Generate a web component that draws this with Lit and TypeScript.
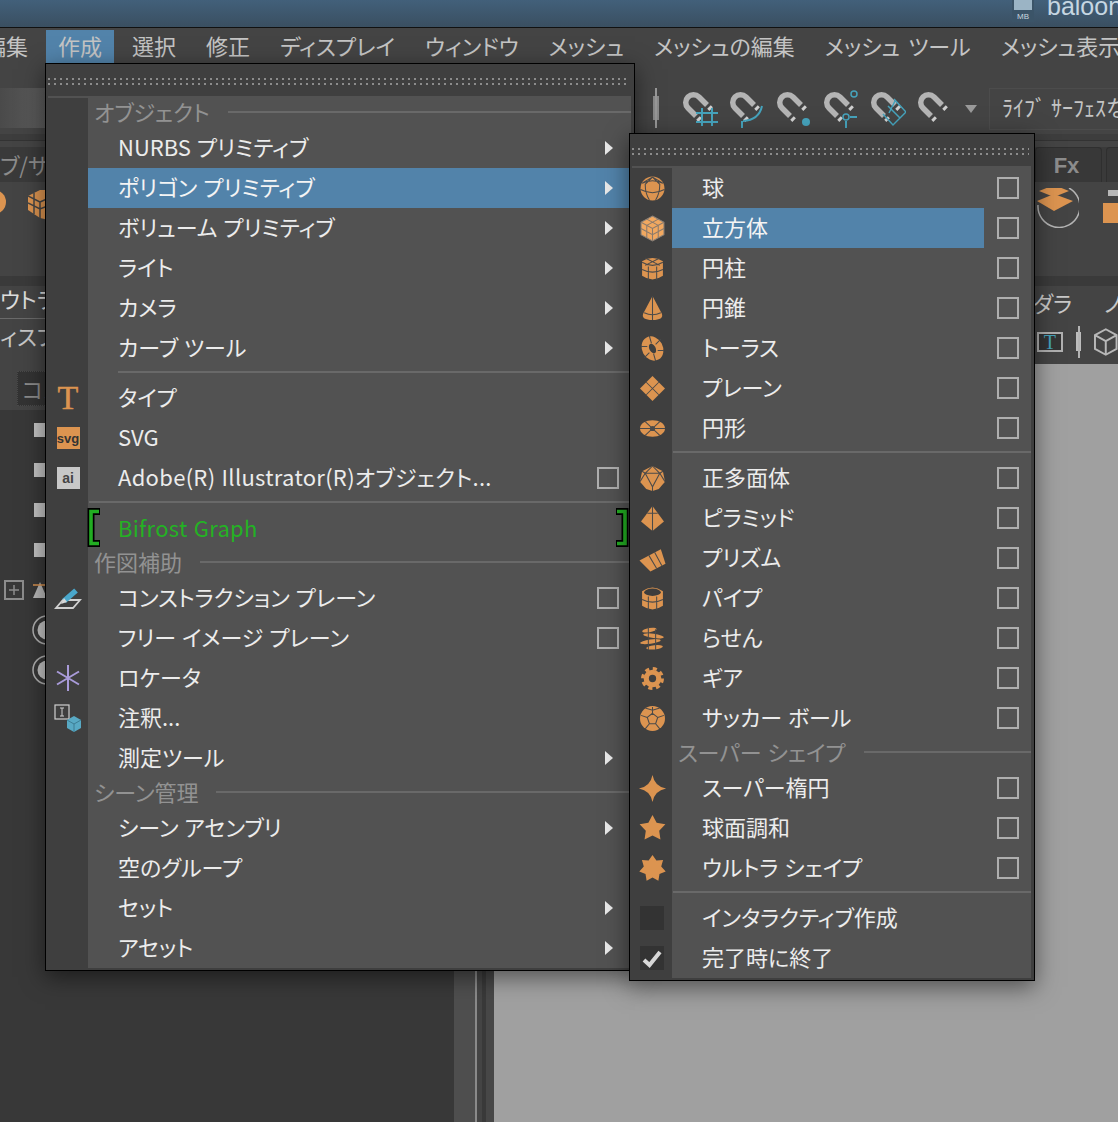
import { LitElement, html, css, svg, nothing } from 'lit';
import { customElement, property } from 'lit/decorators.js';

const O = '#dc9450';
const L = '#4a4a4a';

type Row = {
  kind?: 'item' | 'header' | 'sep' | 'sepInset';
  label?: string;
  icon?: unknown;
  arrow?: boolean;
  box?: boolean;
  hot?: boolean;
  wide?: boolean;
  bifrost?: boolean;
};

function ic(body: unknown) {
  return html`<svg class="ic" viewBox="0 0 24 24" width="25" height="25">${body}</svg>`;
}

function star(n: number, inner: number, r = 12.5) {
  const pts: string[] = [];
  for (let i = 0; i < n * 2; i++) {
    const rad = i % 2 ? r * inner : r;
    const a = (Math.PI * i) / n - Math.PI / 2;
    pts.push(`${(12 + rad * Math.cos(a)).toFixed(2)},${(12 + rad * Math.sin(a)).toFixed(2)}`);
  }
  return pts.join(' ');
}

const lines = (d: string, c = L, w = 1) => svg`<path d=${d} fill="none" stroke=${c} stroke-width=${w} />`;

const icons = {
  sphere: ic(svg`<circle cx="12" cy="12" r="11.5" fill=${O} />${lines('M2 7Q12 2 22 7M.5 13Q12 19 23.5 13M12 1L5 8Q5 17 9 23M12 1L19 8Q19 17 15 23M2 7L12 1L22 7', L)}`),
  cube: ic(svg`<polygon points="12,0 23,6 23,18 12,24 1,18 1,6" fill="#f1a860" stroke="#8b8178" />${lines('M1 6L12 12L23 6M12 12V24M6.500 3L17.500 9M17.500 3L6.500 9M1 12L12 18L23 12M6.500 9V21M17.500 9V21', '#8a7a6c')}`),
  cylinder: ic(svg`<path d="M2 5Q12-1 22 5V19Q12 26 2 19Z" fill=${O} />${lines('M2 6Q12 12 22 6M5 2L19 9M19 2L5 9M2 13Q12 18 22 13M8 10V23M16 10V23', L)}`),
  cone: ic(svg`<path d="M12 0L21 17Q23 23 12 23Q1 23 3 17Z" fill=${O} />${lines('M12 0V23M4 16Q12 20 20 16', L)}`),
  torus: ic(svg`<g transform="rotate(-28 12 12)"><ellipse cx="12" cy="12" rx="6.500" ry="8.500" fill="none" stroke=${O} stroke-width="7" /></g>${lines('M9 0L11 7M1 10L7 10M15 24L13 17M23 14L17 14M20 3L15 8M4 21L9 16', L)}`),
  plane: ic(svg`<polygon points="12,0 24,12 12,24 0,12" fill=${O} />${lines('M6 6L18 18M18 6L6 18', L)}`),
  disc: ic(svg`<ellipse cx="12" cy="12" rx="12" ry="8" fill=${O} />${lines('M5 5.500L19 18.500M19 5.500L5 18.500', L)}${lines('M0 12H24', L, 1)}<circle cx="12" cy="12" r="2.500" fill=${L} />`),
  ico: ic(svg`<polygon points="12,0 22,5 24,15 18,22 12,24 6,22 0,15 2,5" fill=${O} />${lines('M12 0L5 7H19L12 0M5 7L12 20L19 7M5 7L0 15M19 7L24 15M12 20V24M5 7L2 5M19 7L22 5', L)}`),
  pyramid: ic(svg`<polygon points="12,0 23,15 12,24 1,15" fill=${O} />${lines('M12 0V24M7 7L17 7', L)}`),
  prism: ic(svg`<polygon points="-.5,14 20,3 24.500,17 10,24.500" fill=${O} />${lines('M8.500 9L16 21.500M14 6L21 19', L)}`),
  pipe: ic(svg`<path d="M2 5Q12-2 22 5V19Q12 26 2 19Z" fill=${O} /><ellipse cx="12" cy="6" rx="8" ry="3.500" fill="#3c3c3c" />${lines('M2 13Q12 18 22 13M8 10V23M16 10V23', L)}`),
  spiral: ic(svg`<g fill=${O}><ellipse cx="9" cy="4" rx="7" ry="2" transform="rotate(-10 9 4)" /><ellipse cx="13" cy="9.500" rx="10" ry="2" transform="rotate(8 13 9.500)" /><ellipse cx="10" cy="15" rx="10" ry="2" transform="rotate(-8 10 15)" /><ellipse cx="14" cy="20.500" rx="8" ry="2" transform="rotate(-6 14 20.500)" /></g>${lines('M8 1V23M15 3V23', L)}`),
  gear: ic(svg`<circle cx="12" cy="12" r="6" fill="none" stroke=${O} stroke-width="5" /><circle cx="12" cy="12" r="9.500" fill="none" stroke=${O} stroke-width="3" stroke-dasharray="3.960 3.500" />`),
  soccer: ic(svg`<circle cx="12" cy="12" r="12" fill=${O} />${lines('M12 7L17 11L15 17H9L7 11ZM12 7V1M17 11L23 9M15 17L19 22M9 17L5 22M7 11L1 9M5 2L12 4L19 2', L)}`),
  star4: ic(svg`<path d="M12-1Q14 10 25 12Q14 14 12 25Q10 14-1 12Q10 10 12-1Z" fill=${O} />`),
  star5: ic(svg`<polygon points=${star(5, 0.52, 13)} fill=${O} />`),
  star7: ic(svg`<polygon points=${star(7, 0.66, 13)} fill=${O} />`),
  pen: html`<svg class="ic" viewBox="0 0 26 24" width="26" height="24"><path d="M8 14H25L18 22H1Z" fill="none" stroke="#d0d0d0" stroke-width="1.800" /><path d="M9 15L21 4.500" fill="none" stroke="#4aa8cc" stroke-width="5.500" /><path d="M6 18L9 12L12 16Z" fill="#d8d8d8" /></svg>`,
  locator: html`<svg class="ic" viewBox="0 0 24 26" width="24" height="26"><path d="M12 0V26M1 6.500L23 19.500M23 6.500L1 19.500" stroke="#a99bd9" stroke-width="2" fill="none" /></svg>`,
  note: html`<svg class="ic" viewBox="0 0 28 28" width="28" height="28"><rect x="1" y="1" width="14" height="14" fill="none" stroke="#cfcfcf" stroke-width="1.200" /><path d="M6 4H10M6 12H10M8 4V12" stroke="#cfcfcf" fill="none" /><polygon points="20,12 27,16 27,24 20,28 13,24 13,16" fill="#58a9c4" /><path d="M13 16L20 20L27 16M20 20V28" stroke="#3d7d94" fill="none" /></svg>`,
};

const bracket = (flip: boolean) => html`<svg class="bracket ${flip ? 'right' : 'left'}" viewBox="0 0 13 39" width="13" height="39">
  <path d="M13 3.500H4V35.500H13" fill="none" stroke="#000" stroke-width="7" />
  <path d="M12 3.500H4V35.500H12" fill="none" stroke="#22ad22" stroke-width="3.600" />
</svg>`;

const createRows: Row[] = [
  { kind: 'header', label: 'オブジェクト' },
  { label: 'NURBS プリミティブ', arrow: true },
  { label: 'ポリゴン プリミティブ', arrow: true, hot: true },
  { label: 'ボリューム プリミティブ', arrow: true },
  { label: 'ライト', arrow: true },
  { label: 'カメラ', arrow: true },
  { label: 'カーブ ツール', arrow: true },
  { kind: 'sepInset' },
  { label: 'タイプ', icon: html`<span class="glyph-t">T</span>` },
  { label: 'SVG', icon: html`<span class="badge svg">svg</span>` },
  { label: 'Adobe(R) Illustrator(R)オブジェクト...', icon: html`<span class="badge ai">ai</span>`, box: true, wide: true },
  { kind: 'sep' },
  { label: 'Bifrost Graph', bifrost: true, wide: true },
  { kind: 'header', label: '作図補助' },
  { label: 'コンストラクション プレーン', icon: icons.pen, box: true },
  { label: 'フリー イメージ プレーン', box: true },
  { label: 'ロケータ', icon: icons.locator },
  { label: '注釈...', icon: icons.note },
  { label: '測定ツール', arrow: true },
  { kind: 'header', label: 'シーン管理' },
  { label: 'シーン アセンブリ', arrow: true },
  { label: '空のグループ' },
  { label: 'セット', arrow: true },
  { label: 'アセット', arrow: true },
];

const polyRows: Row[] = [
  { label: '球', icon: icons.sphere, box: true },
  { label: '立方体', icon: icons.cube, box: true, hot: true },
  { label: '円柱', icon: icons.cylinder, box: true },
  { label: '円錐', icon: icons.cone, box: true },
  { label: 'トーラス', icon: icons.torus, box: true },
  { label: 'プレーン', icon: icons.plane, box: true },
  { label: '円形', icon: icons.disc, box: true },
  { kind: 'sep' },
  { label: '正多面体', icon: icons.ico, box: true },
  { label: 'ピラミッド', icon: icons.pyramid, box: true },
  { label: 'プリズム', icon: icons.prism, box: true },
  { label: 'パイプ', icon: icons.pipe, box: true },
  { label: 'らせん', icon: icons.spiral, box: true },
  { label: 'ギア', icon: icons.gear, box: true },
  { label: 'サッカー ボール', icon: icons.soccer, box: true },
  { kind: 'header', label: 'スーパー シェイプ' },
  { label: 'スーパー楕円', icon: icons.star4, box: true },
  { label: '球面調和', icon: icons.star5, box: true },
  { label: 'ウルトラ シェイプ', icon: icons.star7, box: true },
  { kind: 'sep' },
  { label: 'インタラクティブ作成', icon: html`<span class="dark-box"></span>` },
  {
    label: '完了時に終了',
    icon: html`<span class="dark-box"><svg viewBox="0 0 24 24" width="24" height="24"><path d="M4 14L9.500 19L20 6" fill="none" stroke="#d6d6d6" stroke-width="4" /></svg></span>`,
  },
];

@customElement('maya-menu')
export class MayaMenu extends LitElement {
  @property({ type: Array }) rows: Row[] = [];

  static styles = css`
    :host {
      display: block;
      box-sizing: border-box;
      border: 1px solid #000;
      background: #3f3f3f;
      padding: 0 3px 2px 2px;
      box-shadow: 0 6px 22px rgba(0, 0, 0, 0.5);
      font: 22px "Noto Sans CJK JP", "Noto Sans", sans-serif;
      font-feature-settings: "palt";
      word-spacing: 1px;
      color: #ececec;
    }
    .grip {
      height: 32px;
      box-sizing: border-box;
      padding-top: 14px;
      margin-right: 2px;
    }
    .dots {
      height: 2px;
      margin-bottom: 3px;
      background-image: linear-gradient(90deg, #8c8c8c 2px, transparent 2px);
      background-size: 6px 2px;
    }
    .body {
      padding-top: 2px;
      background: #525252;
    }
    .row {
      position: relative;
      display: flex;
      height: 40px;
      line-height: 36px;
    }
    .gutter {
      width: 40px;
      flex: none;
      display: flex;
      align-items: center;
      justify-content: center;
      background: #3f3f3f;
    }
    .label {
      flex: 1;
      padding-left: 30px;
      white-space: nowrap;
    }
    .wide .label {
      letter-spacing: 0.3px;
    }
    .opt {
      width: 47px;
      flex: none;
      display: flex;
      align-items: center;
      padding-left: 13px;
      box-sizing: border-box;
    }
    .hot .label {
      background: #5283aa;
      color: #f4f4f4;
    }
    .hot.arrow .opt {
      background: #5283aa;
    }
    .box {
      width: 22px;
      height: 22px;
      box-sizing: border-box;
      border: 2px solid #aeaeae;
    }
    .tri {
      margin-left: 8px;
      margin-top: -1px;
      width: 0;
      height: 0;
      border-left: 8px solid #e8e8e8;
      border-top: 7px solid transparent;
      border-bottom: 7px solid transparent;
    }
    .header {
      height: 30px;
      line-height: 26px;
      display: flex;
      align-items: flex-start;
    }
    .header .gutter {
      align-self: stretch;
    }
    .header .title {
      margin-left: 6px;
      color: #929292;
      white-space: nowrap;
    }
    .header .rule {
      flex: 1;
      height: 2px;
      background: #696969;
      margin: 13px 0 0 18px;
    }
    .sep {
      display: flex;
      height: 10px;
    }
    .sep .rule {
      flex: 1;
      height: 2px;
      margin-top: 3px;
      margin-left: 1px;
      background: #696969;
    }
    .sep.inset .rule {
      margin-left: 30px;
    }
    .bif .label {
      color: #24b224;
      line-height: 38px;
    }
    .bracket {
      position: absolute;
      top: 0;
    }
    .bracket.left {
      left: 39px;
    }
    .bracket.right {
      right: 2px;
      transform: scaleX(-1);
    }
    .glyph-t {
      font: 34px/1 "Liberation Serif", serif;
      color: #dc9450;
      -webkit-text-stroke: 0.5px #dc9450;
    }
    .badge {
      width: 23px;
      height: 22px;
      display: flex;
      align-items: center;
      justify-content: center;
      font: bold 13px/1 "Liberation Sans", sans-serif;
      color: #333;
    }
    .badge.svg {
      background: #dc9450;
    }
    .badge.ai {
      background: #c8c8c8;
      color: #444;
      font-size: 14px;
    }
    .dark-box {
      width: 24px;
      height: 24px;
      background: #333;
      display: block;
    }
    .dark-box svg,
    .ic {
      display: block;
      overflow: visible;
    }
  `;

  private renderRow(r: Row) {
    if (r.kind === 'header') {
      return html`<div class="header"><div class="gutter"></div><span class="title">${r.label}</span><div class="rule"></div></div>`;
    }
    if (r.kind === 'sep' || r.kind === 'sepInset') {
      return html`<div class="sep ${r.kind === 'sepInset' ? 'inset' : ''}"><div class="gutter"></div><div class="rule"></div></div>`;
    }
    const cls = `row ${r.hot ? 'hot' : ''} ${r.arrow ? 'arrow' : ''} ${r.bifrost ? 'bif' : ''} ${r.wide ? 'wide' : ''}`;
    return html`<div class=${cls}>
      <div class="gutter">${r.icon ?? nothing}</div>
      <div class="label">${r.label}</div>
      <div class="opt">
        ${r.box ? html`<div class="box"></div>` : nothing}
        ${r.arrow ? html`<div class="tri"></div>` : nothing}
      </div>
      ${r.bifrost ? html`${bracket(false)}${bracket(true)}` : nothing}
    </div>`;
  }

  render() {
    return html`
      <div class="grip"><div class="dots"></div><div class="dots"></div></div>
      <div class="body">${this.rows.map((r) => this.renderRow(r))}</div>
    `;
  }
}

const magnet = (extra: unknown) => html`<svg class="mag" viewBox="0 0 36 40" width="36" height="40">
  <path d="M25 17L17 9A7.500 7.500 0 0 0 6 20L14 28" fill="none" stroke="#b4b4b4" stroke-width="5.500" />
  <path d="M27 19L30 22M16 30L19 33" fill="none" stroke="#d0d0d0" stroke-width="5" stroke-dasharray="3 9" />
  ${extra}
</svg>`;

const teal = (d: string) => svg`<path d=${d} fill="none" stroke="#46a3bc" stroke-width="2" />`;

@customElement('app-root')
export class AppRoot extends LitElement {
  static styles = css`
    :host {
      display: block;
      position: relative;
      width: 1118px;
      height: 1122px;
      overflow: hidden;
      background: #363636;
      font: 22px "Noto Sans CJK JP", "Noto Sans", sans-serif;
      font-feature-settings: "palt";
      color: #c8c8c8;
    }
    .titlebar {
      height: 27px;
      background: linear-gradient(#42607a, #3a4f61);
      border-bottom: 1px solid #111;
      display: flex;
      justify-content: flex-start;
      padding-left: 1012px;
      overflow: hidden;
    }
    .doc {
      width: 22px;
      height: 22px;
      flex: none;
      background: #3b5468;
      position: relative;
      text-align: center;
      font: 8px/8px "Liberation Sans", sans-serif;
      color: #c9d6df;
    }
    .doc i {
      display: block;
      height: 10px;
      margin: 0 2px 3px;
      background: #9bb4c5;
    }
    .filename {
      margin-left: 13px;
      font: 25px/20px "Liberation Sans", sans-serif;
      color: #c6d6e2;
      white-space: nowrap;
      margin-top: -4px;
    }
    .menubar {
      height: 35px;
      display: flex;
      gap: 6px;
      margin-left: -28px;
      background: #444;
      white-space: nowrap;
      word-spacing: 3px;
    }
    .menubar span {
      padding: 0 12px;
      height: 33px;
      margin-top: 2px;
      line-height: 30px;
      color: #c4c4c4;
    }
    .menubar span.on {
      background: #5283aa;
    }
    .toolbar {
      height: 65px;
      background: #444;
      display: flex;
      align-items: flex-start;
      padding-top: 25px;
      box-sizing: border-box;
    }
    .status {
      width: 46px;
      height: 40px;
      background: linear-gradient(90deg, #4a4a4a, #5c5c5c);
    }
    .handle {
      margin-left: 607px;
      margin-right: 23px;
      width: 6px;
      height: 40px;
      background: linear-gradient(#999, #999) center / 2px 100% no-repeat, linear-gradient(#8a8a8a, #8a8a8a) center / 6px 60% no-repeat;
    }
    .mags {
      display: flex;
      gap: 11px;
    }
    .drop {
      margin: 17px 12px 0 12px;
      width: 0;
      height: 0;
      border-top: 8px solid #9a9a9a;
      border-left: 6px solid transparent;
      border-right: 6px solid transparent;
    }
    .live {
      flex: 1;
      height: 40px;
      padding-left: 12px;
      border: 1px solid #4c4c4c;
      border-right: none;
      font-size: 22px;
      line-height: 34px;
      white-space: nowrap;
      overflow: hidden;
      font-feature-settings: normal;
      color: #c4c4c4;
    }
    .band {
      height: 19px;
      background: linear-gradient(#444 0 6px, #3d3d3d 6px 12px, #333 12px 13px, #444 13px);
    }
    .tabs {
      height: 35px;
      display: flex;
      justify-content: space-between;
      background: #3a3a3a;
      color: #8c8c8c;
      overflow: hidden;
    }
    .tabs .left {
      line-height: 34px;
      white-space: nowrap;
    }
    .tab-wrap {
      display: flex;
      gap: 4px;
      margin-right: -4px;
    }
    .tab {
      width: 67px;
      text-align: center;
      padding-right: 4px;
      box-sizing: border-box;
      border: 1px solid #2f2f2f;
      border-bottom: none;
      border-radius: 4px 4px 0 0;
      background: #383838;
      font: bold 22px/36px "Liberation Sans", sans-serif;
      color: #8c8c8c;
    }
    .tab.next {
      width: 16px;
    }
    .shelf {
      height: 94px;
      background: #444;
      display: flex;
      justify-content: space-between;
      align-items: flex-start;
      padding-top: 6px;
      box-sizing: border-box;
    }
    .shelf .l,
    .shelf .r {
      display: flex;
    }
    .shelf .l {
      margin-left: -18px;
      gap: 22px;
    }
    .shelf .r {
      gap: 24px;
    }
    .shelf-square {
      width: 15px;
      padding-top: 2px;
    }
    .shelf-square i {
      display: block;
      height: 6px;
      margin-left: 5px;
      background: #b8b8b8;
      margin-bottom: 7px;
    }
    .shelf-square b {
      display: block;
      height: 20px;
      background: #dc9450;
    }
    .workgap {
      height: 10px;
      background: #3a3a3a;
    }
    .work {
      display: flex;
      height: 836px;
    }
    .outliner {
      width: 454px;
      flex: none;
      background: #383838;
    }
    .out-head {
      height: 124px;
      background: #444;
      white-space: nowrap;
      box-sizing: border-box;
    }
    .out-title {
      height: 32px;
      line-height: 25px;
      color: #dcdcdc;
      border-bottom: 1px solid #6a6a6a;
    }
    .out-sub {
      height: 37px;
      line-height: 32px;
    }
    .out-field {
      margin: 15px 0 0 17px;
      height: 35px;
      padding-left: 4px;
      width: 30px;
      background: #333;
      border: 1px dotted #4a4a4a;
      box-sizing: border-box;
      color: #8a8a8a;
      line-height: 32px;
    }
    .tree-row {
      height: 40px;
      display: flex;
      align-items: center;
      padding-left: 34px;
    }
    .tree-row i {
      width: 14px;
      height: 14px;
      background: #c4c4c4;
    }
    .plus {
      margin-left: -30px;
      margin-right: 9px;
      width: 20px;
      height: 20px;
      flex: none;
    }
    .ring {
      width: 30px;
      height: 30px;
      margin-left: -2px;
      flex: none;
    }
    .strips {
      width: 40px;
      flex: none;
      display: flex;
    }
    .s1 {
      width: 21px;
      background: #4e4e4e;
    }
    .s2 {
      width: 2px;
      background: #8a8a8a;
    }
    .s3 {
      flex: 1;
      background: linear-gradient(90deg, #444 0 5px, #393939 5px 9px, #474747 9px);
    }
    .view {
      flex: 1;
      display: flex;
      flex-direction: column;
      min-width: 0;
    }
    .pane-menu {
      height: 34px;
      background: #444;
      display: flex;
      padding-left: 539px;
      gap: 32px;
      line-height: 32px;
      white-space: nowrap;
      overflow: hidden;
    }
    .pane-tools {
      height: 44px;
      background: #444;
      display: flex;
      align-items: center;
      padding-left: 543px;
    }
    .tbox {
      width: 26px;
      height: 20px;
      border: 2px solid #b0b0b0;
      background: #333;
      box-sizing: border-box;
      font: 20px/17px "Liberation Serif", serif;
      color: #46a3bc;
      text-align: center;
    }
    .pane-grip {
      margin: 0 13px;
      width: 6px;
      height: 32px;
      background: linear-gradient(#b4b4b4, #b4b4b4) center / 2px 100% no-repeat, linear-gradient(#bcbcbc, #bcbcbc) center / 6px 60% no-repeat;
    }
    .viewport {
      flex: 1;
      background: #a0a0a0;
    }
    maya-menu {
      position: absolute;
    }
    .m-create {
      left: 45px;
      top: 63px;
      width: 590px;
    }
    .m-poly {
      left: 629px;
      top: 133px;
      width: 406px;
    }
  `;

  render() {
    return html`
      <div class="titlebar">
        <div class="doc"><i></i>MB</div>
        <div class="filename">baloon</div>
      </div>
      <div class="menubar">
        <span>編集</span><span class="on">作成</span><span>選択</span><span>修正</span><span>ディスプレイ</span><span>ウィンドウ</span><span>メッシュ</span><span>メッシュの編集</span><span>メッシュ ツール</span><span>メッシュ表示</span>
      </div>
      <div class="toolbar">
        <div class="status"></div>
        <div class="handle"></div>
        <div class="mags">
          ${magnet(teal('M20 20V38M30 20V38M14 25H36M14 34H36'))}
          ${magnet(teal('M14 33Q30 32 33 18M13 33V40'))}
          ${magnet(svg`<circle cx="30" cy="34" r="4" fill="#46a3bc" />`)}
          ${magnet(svg`<circle cx="31" cy="6" r="3" fill="none" stroke="#46a3bc" stroke-width="1.500" /><circle cx="23" cy="29" r="3" fill="none" stroke="#46a3bc" stroke-width="1.500" />${teal('M27 29H34M23 33V40')}`)}
          ${magnet(svg`<path d="M24 11L36 24L23 37L13 26M18 18L30 30M25 13L19 25" fill="none" stroke="#46a3bc" stroke-width="1.500" />`)}
          ${magnet(nothing)}
        </div>
        <div class="drop"></div>
        <div class="live">ﾗｲﾌﾞ ｻｰﾌｪｽな</div>
      </div>
      <div class="band"></div>
      <div class="tabs">
        <div class="left">ブ/サ</div>
        <div class="tab-wrap"><div class="tab">Fx</div><div class="tab next"></div></div>
      </div>
      <div class="shelf">
        <div class="l">
          <svg viewBox="0 0 24 30" width="24" height="30"><circle cx="12" cy="14" r="12" fill="#dc9450" /></svg>
          <svg viewBox="0 0 30 34" width="30" height="34"><path d="M0 8L12 2L30 2V34L12 30L0 22Z" fill="#dc9450" /><path d="M0 8L12 14V32M0 15L12 21L30 14M6 5V26M12 14L30 6" fill="none" stroke="#444" stroke-width="1.500" /></svg>
        </div>
        <div class="r">
          <svg viewBox="0 0 46 40" width="46" height="40">
            <path d="M36 0A21 21 0 1 1 5 17" fill="none" stroke="#b4b4b4" stroke-width="1.500" />
            <polygon points="21,-3 36,3 21,9 6,3" fill="#dc9450" />
            <polygon points="21,6 40,13 21,23 4,13" fill="#dc9450" />
          </svg>
          <div class="shelf-square"><i></i><b></b></div>
        </div>
      </div>
      <div class="workgap"></div>
      <div class="work">
        <div class="outliner">
          <div class="out-head">
            <div class="out-title">ウトラ</div>
            <div class="out-sub">ィスプ</div>
            <div class="out-field">コン</div>
          </div>
          <div class="tree-row"><i></i></div>
          <div class="tree-row"><i></i></div>
          <div class="tree-row"><i></i></div>
          <div class="tree-row"><i></i></div>
          <div class="tree-row">
            <svg class="plus" viewBox="0 0 20 20"><rect x="1" y="1" width="18" height="18" fill="none" stroke="#8c8c8c" stroke-width="2" /><path d="M10 5V15M5 10H15" stroke="#8c8c8c" stroke-width="1.500" /></svg>
            <svg viewBox="0 0 14 16" width="14" height="16"><polygon points="7,0 14,16 0,16" fill="#bbb" /><path d="M0 3H14" stroke="#dc9450" stroke-width="1.500" /></svg>
          </div>
          <div class="tree-row">
            <svg class="ring" viewBox="0 0 30 30"><circle cx="15" cy="15" r="14" fill="none" stroke="#b0b0b0" stroke-width="1.500" /><circle cx="15" cy="15" r="9.500" fill="#c4c4c4" /></svg>
          </div>
          <div class="tree-row">
            <svg class="ring" viewBox="0 0 30 30"><circle cx="15" cy="15" r="14" fill="none" stroke="#b0b0b0" stroke-width="1.500" /><circle cx="15" cy="15" r="9.500" fill="#c4c4c4" /></svg>
          </div>
        </div>
        <div class="strips"><div class="s1"></div><div class="s2"></div><div class="s3"></div></div>
        <div class="view">
          <div class="pane-menu"><span>ダラ</span><span>ノ</span></div>
          <div class="pane-tools">
            <div class="tbox">T</div>
            <div class="pane-grip"></div>
            <svg viewBox="0 0 24 28" width="24" height="28"><path d="M12 1L23 7V21L12 27L1 21V7ZM1 7L12 13L23 7M12 13V27" fill="none" stroke="#b8b8b8" stroke-width="2" /></svg>
          </div>
          <div class="viewport"></div>
        </div>
      </div>
      <maya-menu class="m-create" .rows=${createRows}></maya-menu>
      <maya-menu class="m-poly" .rows=${polyRows}></maya-menu>
    `;
  }
}
